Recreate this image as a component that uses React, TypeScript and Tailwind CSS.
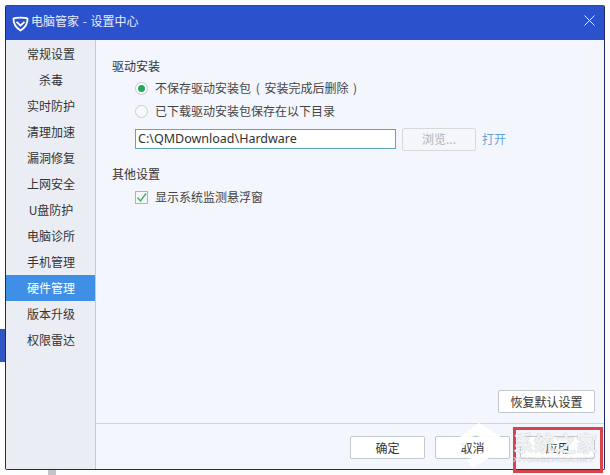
import React from "react";

const items = ["常规设置","杀毒","实时防护","清理加速","漏洞修复","上网安全","U盘防护","电脑诊所","手机管理","硬件管理","版本升级","权限雷达"];

function Btn({ children, className = "" }: { children: React.ReactNode; className?: string }) {
  return (
    <div className={`flex h-[23px] w-[75px] items-center justify-center rounded-[2px] border border-[#c3c7cf] bg-white text-[12px] text-[#333] ${className}`}>
      {children}
    </div>
  );
}

export default function App() {
  return (
    <div className="relative h-[475px] w-[610px] overflow-hidden bg-[#fdfdfe] pl-[5px] pt-[5px] font-['Noto_Sans_CJK_SC','Liberation_Sans',sans-serif]">
      <div className="absolute left-0 top-[329px] h-[33px] w-[5px] bg-[#2f55c4]" />
      <div className="absolute left-[48px] top-[470px] h-[5px] w-[8px] bg-[#c4c4c8]" />
      <div className="flex h-[465px] w-[600px] flex-col rounded-[2px] border border-[#1d2a66] border-t-[#2748b8] bg-[#f4f6fd]">
        <div className="flex h-[34px] shrink-0 items-center bg-[#2b52cc] pb-[4px] pl-[6px] pr-[9px] text-white">
          <svg width="17" height="17" viewBox="0 0 17 17" fill="none" className="mr-[2px] mt-[5px]">
            <path d="M1.5 3.5 C4 2.2 13 2.2 15.5 3.5 C15.7 8.5 12.5 13 8.5 15.5 C4.5 13 1.3 8.5 1.5 3.5Z" stroke="white" strokeWidth="1.8" />
            <path d="M4.5 6.8 L8.5 10.5 L12.5 6.8" stroke="white" strokeWidth="1.8" />
          </svg>
          <span className="text-[12px] text-[#e8edfb] [word-spacing:1px]">电脑管家 - 设置中心</span>
          <svg width="11" height="11" viewBox="0 0 11 11" className="-mt-[2px] ml-auto">
            <path d="M0.5 0.5 L10.5 10.5 M10.5 0.5 L0.5 10.5" stroke="#e6ecfb" strokeWidth="1" />
          </svg>
        </div>
        <div className="flex min-h-0 flex-1">
          <div className="w-[90px] shrink-0 border-r border-[#c6c9d6] bg-[#ebedf5] pt-[1px]">
            {items.map((t) => (
              <div
                key={t}
                className={`flex h-[26px] items-center justify-center pl-[1px] text-[12px] ${t === "硬件管理" ? "bg-[#3f8fe6] text-white" : "text-[#333]"}`}
              >
                {t}
              </div>
            ))}
          </div>
          <div className="flex min-w-0 flex-1 flex-col">
            <div className="flex flex-1 flex-col pl-[16px] pt-[17px]">
              <div className="text-[12px] leading-[18px] text-[#333]">驱动安装</div>
              <div className="mt-[4px] flex h-[18px] items-center pl-[23px] text-[12px] text-[#444]">
                <span className="flex h-[13px] w-[13px] items-center justify-center rounded-full border border-[#c4c8ce] bg-white">
                  <span className="h-[7px] w-[7px] rounded-full bg-[#22a95a]" />
                </span>
                <span className="ml-[7px] [word-spacing:2px]">不保存驱动安装包 ( 安装完成后删除 )</span>
              </div>
              <div className="mt-[5px] flex h-[18px] items-center pl-[23px] text-[12px] text-[#444]">
                <span className="h-[13px] w-[13px] rounded-full border border-[#c9ccd2] bg-[#f8f9fb]" />
                <span className="ml-[7px]">已下载驱动安装包保存在以下目录</span>
              </div>
              <div className="mt-[7px] flex h-[24px] items-center pl-[23px]">
                <div className="flex h-[20px] w-[261px] items-center border border-[#63a5b8] bg-white pl-[2px] font-['Noto_Sans','Liberation_Sans',sans-serif] text-[12.5px] text-[#333]">
                  C:\QMDownload\Hardware
                </div>
                <div className="ml-[6px] flex h-[23px] w-[74px] items-center justify-center rounded-[2px] border border-[#d4d8df] bg-[#f4f6fa] text-[12px] text-[#b0b4bb]">
                  浏览...
                </div>
                <span className="ml-[6px] text-[12px] text-[#62a5d6]">打开</span>
              </div>
              <div className="mt-[14px] text-[12px] leading-[18px] text-[#333]">其他设置</div>
              <div className="mt-[5px] flex h-[18px] items-center pl-[23px] text-[12px] text-[#444]">
                <span className="flex h-[13px] w-[13px] items-center justify-center border border-[#a9b4bc] bg-[#f4f7f6]">
                  <svg width="11" height="11" viewBox="0 0 11 11" fill="none">
                    <path d="M1.5 5.5 L4.5 9 L10 1.5" stroke="#3fae68" strokeWidth="1.3" />
                  </svg>
                </span>
                <span className="ml-[7px]">显示系统监测悬浮窗</span>
              </div>
              <div className="mt-auto flex justify-end pb-[10px] pr-[9px]">
                <Btn className="w-[97px]">恢复默认设置</Btn>
              </div>
            </div>
            <div className="flex h-[46px] shrink-0 items-start justify-end gap-[10px] border-t border-[#cfd4de] pr-[9px] pt-[12px]">
              <Btn>确定</Btn>
              <Btn>取消</Btn>
              <Btn>应用</Btn>
            </div>
          </div>
        </div>
      </div>
      <div className="absolute left-[513px] top-[427px] h-[46px] w-[90px] border-[3px] border-[#d8424a]" />
      <svg width="72" height="52" viewBox="0 0 72 52" fill="none" className="absolute left-[441px] top-[420px]">
        <path d="M2 30 L28 10 L38 3 L68 22 L52 26 L34 14 L20 30 Z" fill="white" fillOpacity="0.92" />
        <path d="M26 40 L56 26 L56 33 L32 48 Z" fill="white" fillOpacity="0.92" />
      </svg>
      <span className="absolute left-[513px] top-[432px] whitespace-nowrap text-[21px] font-bold leading-none text-white/85 [text-shadow:0_0_1px_#9aa0ac]">系统之家</span>
      <span className="absolute left-[513px] top-[456px] whitespace-nowrap font-['Liberation_Sans',sans-serif] text-[8px] leading-none tracking-[0.5px] text-white/80 [text-shadow:0_0_1px_#9aa0ac]">XITONGZHIJIA.NET</span>
    </div>
  );
}
